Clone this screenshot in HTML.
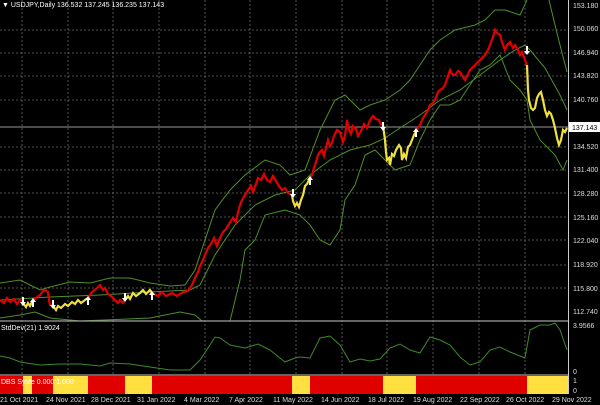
<!DOCTYPE html>
<html><head><style>
html,body{margin:0;padding:0;background:#000;width:600px;height:405px;overflow:hidden}
svg{display:block}
text{font-family:"Liberation Sans",sans-serif;font-size:7px;fill:#ddd}
</style></head><body>
<svg width="600" height="405" viewBox="0 0 600 405">
<defs>
<path id="dn" d="M-1,-5 H1 V0 H3 L0,4 L-3,0 H-1 Z" fill="#fff"/>
<path id="up" d="M-1,5 H1 V0 H3 L0,-4 L-3,0 H-1 Z" fill="#fff"/>
</defs>
<rect width="600" height="405" fill="#000"/>
<g stroke="#6a6a6a" stroke-width="0.8" stroke-dasharray="2,2">
<line x1="22" y1="0" x2="22" y2="394"/><line x1="68" y1="0" x2="68" y2="394"/><line x1="113" y1="0" x2="113" y2="394"/><line x1="159" y1="0" x2="159" y2="394"/><line x1="205" y1="0" x2="205" y2="394"/><line x1="250" y1="0" x2="250" y2="394"/><line x1="296" y1="0" x2="296" y2="394"/><line x1="342" y1="0" x2="342" y2="394"/><line x1="387" y1="0" x2="387" y2="394"/><line x1="433" y1="0" x2="433" y2="394"/><line x1="479" y1="0" x2="479" y2="394"/><line x1="525" y1="0" x2="525" y2="394"/>
<line x1="0" y1="30" x2="568" y2="30"/><line x1="0" y1="53" x2="568" y2="53"/><line x1="0" y1="76" x2="568" y2="76"/><line x1="0" y1="100" x2="568" y2="100"/><line x1="0" y1="147" x2="568" y2="147"/><line x1="0" y1="170" x2="568" y2="170"/><line x1="0" y1="193" x2="568" y2="193"/><line x1="0" y1="217" x2="568" y2="217"/><line x1="0" y1="240" x2="568" y2="240"/><line x1="0" y1="265" x2="568" y2="265"/><line x1="0" y1="288" x2="568" y2="288"/>
</g>
<line x1="0" y1="127" x2="568" y2="127" stroke="#9a9a9a" stroke-width="1"/>
<g fill="none" stroke="#4f8f2a" stroke-width="1">
<polyline points="0,283 20,280 40,290 50,287 70,282 90,283 110,278 130,278 150,283 170,286 185,285 195,270 215,210 230,190 245,175 265,160 280,165 290,175 305,170 320,130 335,100 345,95 360,110 370,105 385,100 400,90 410,80 420,65 430,50 440,40 455,30 475,25 485,20 495,10 505,10 520,15 527,0"/>
<polyline points="549,0 555,25 560,45 567,72"/>
<polyline points="0,300 50,297 100,295 150,292 190,290 200,285 215,255 235,225 255,205 275,195 295,190 310,175 330,160 350,150 370,145 385,138 400,128 420,115 440,100 460,90 480,75 500,60 515,50 525,45 530,50 545,68 560,95 567,110"/>
<polyline points="0,318 20,315 35,312 50,318 80,321 150,318 180,312 195,315 202,321"/>
<polyline points="230,321 240,280 245,250 255,240 265,215 285,210 300,215 310,225 320,240 330,245 340,230 345,200 355,185 365,155 375,150 385,160 395,170 410,165 420,140 430,120 440,105 450,105 460,100 470,85 480,70 490,65 500,55 510,80 520,90 527,100 530,120 540,140 555,155 563,170 567,160"/>
</g>
<g fill="none" stroke-width="2.2" stroke-linejoin="miter">
<polyline stroke="#e00000" points="0,300 4,303 7,298 10,302 14,299 17,304 20,300 23,303"/>
<polyline stroke="#f0e040" points="23,303 26,307 28,303 30,306 32,302"/>
<polyline stroke="#e00000" points="32,302 36,298 40,295 43,291 45,290 48,292 49,300 50,305 53,305"/>
<polyline stroke="#f0e040" points="53,306 56,310 58,306 61,308 65,304 68,306 72,302 75,304 78,300 81,303 85,300 88,298"/>
<polyline stroke="#e00000" points="88,298 92,292 96,289 100,285 103,290 105,288 108,294 112,297 115,300 118,303 120,300 123,303 125,300"/>
<polyline stroke="#f0e040" points="125,300 128,296 130,299 133,293 136,296 140,293 143,290 146,294 150,290 152,293"/>
<polyline stroke="#e00000" points="152,293 158,296 162,292 166,296 172,293 177,296 183,292 188,291 192,285 195,278 198,272 200,266 203,260 205,255 208,248 211,244 214,238 217,246 220,238 223,232 226,229 229,224 233,218 236,222 239,208 242,200 245,195 248,190 251,186 253,192 256,184 258,178 261,180 264,174 267,180 270,182 273,176 276,181 279,186 282,190 285,188 288,193 292,195"/>
<polyline stroke="#f0e040" points="292,195 293,201 295,206 297,203 299,207 301,200 303,195 305,186 307,184 310,178"/>
<polyline stroke="#e00000" points="310,178 312,175 314,168 316,162 318,155 320,152 322,150 324,156 326,148 328,140 330,146 332,143 334,136 337,130 340,132 343,142 345,136 347,120 349,130 351,134 353,126 356,129 358,136 361,131 364,124 367,128 370,120 373,116 376,119 379,120 381,124 383,125"/>
<polyline stroke="#f0e040" points="383,125 385,140 386,152 387,160 389,158 390,165 392,154 394,156 396,150 399,145 401,148 402,160 404,154 406,158 408,147 410,145 412,140 414,135 416,132"/>
<polyline stroke="#e00000" points="416,132 418,128 420,125 423,118 425,115 428,110 430,105 433,103 435,100 438,92 440,90 443,88 445,85 448,76 450,70 452,74 455,75 458,71 460,72 463,77 465,80 468,74 470,70 473,67 475,65 478,62 480,60 483,57 485,55 488,50 490,45 493,37 495,30 497,33 500,35 502,42 505,50 507,45 510,42 513,48 515,45 518,50 520,55 522,52 525,60 527,65"/>
<polyline stroke="#f0e040" points="527,65 528,90 529,100 531,108 533,110 535,108 537,98 539,94 541,92 543,100 545,110 547,116 549,112 551,114 553,120 555,128 557,138 559,145 561,140 563,130 565,132 567,128"/>
</g>
<use href="#dn" x="23" y="302"/><use href="#up" x="33" y="302"/>
<use href="#dn" x="53" y="305"/><use href="#up" x="88" y="300"/>
<use href="#dn" x="125" y="298"/><use href="#up" x="152" y="295"/>
<use href="#dn" x="293" y="194"/><use href="#up" x="310" y="180"/>
<use href="#dn" x="383" y="127"/><use href="#up" x="416" y="132"/>
<use href="#dn" x="527" y="51"/>
<line x1="0" y1="321" x2="568" y2="321" stroke="#a0a0a0" stroke-width="1.2"/>
<line x1="0" y1="375" x2="568" y2="375" stroke="#a0a0a0" stroke-width="1.2"/>
<polyline fill="none" stroke="#3c8a2a" stroke-width="1" points="0,356 10,358 20,362 40,365 60,364 80,364 100,366 110,363 130,364 150,367 170,370 190,370 200,360 210,345 215,337 220,338 230,345 245,348 258,344 270,350 285,362 295,358 300,357 310,358 320,338 330,336 340,345 350,362 360,359 370,361 380,359 390,348 400,344 410,350 420,353 430,337 440,340 450,345 460,357 470,365 480,362 490,350 500,347 510,352 525,358 530,330 540,325 550,325 555,323 560,330 567,350"/>
<g>
<rect x="0" y="376" width="568" height="18" fill="#e00000"/>
<rect x="23" y="376" width="9" height="18" fill="#ffe040"/>
<rect x="53" y="376" width="35" height="18" fill="#ffe040"/>
<rect x="125" y="376" width="27" height="18" fill="#ffe040"/>
<rect x="292" y="376" width="18" height="18" fill="#ffe040"/>
<rect x="383" y="376" width="33" height="18" fill="#ffe040"/>
<rect x="527" y="376" width="41" height="18" fill="#ffe040"/>
</g>
<line x1="568.5" y1="0" x2="568.5" y2="394" stroke="#ccc" stroke-width="1"/>
<text x="2" y="7" style="fill:#fff">▼ USDJPY,Daily  136.532 137.245 136.235 137.143</text>
<text x="1" y="330" style="fill:#fff">StdDev(21) 1.9024</text>
<text x="1" y="384" style="fill:#fff">DBS Syste  0.000  1.000</text>
<g>
<text x="573" y="8">153.180</text><text x="573" y="31">150.060</text><text x="573" y="55">146.940</text><text x="573" y="78">143.820</text><text x="573" y="102">140.760</text><text x="573" y="149">134.520</text><text x="573" y="172">131.400</text><text x="573" y="196">128.280</text><text x="573" y="220">125.160</text><text x="573" y="243">122.040</text><text x="573" y="267">118.920</text><text x="573" y="291">115.800</text><text x="573" y="314">112.740</text>
<text x="573" y="328">3.9566</text><text x="573" y="374">0</text><text x="573" y="383">1</text><text x="573" y="393">0</text>
</g>
<rect x="569" y="122" width="31" height="10" fill="#fff"/>
<text x="572" y="130" style="fill:#000">137.143</text>
<g>
<text x="0" y="402">21 Oct 2021</text><text x="46" y="402">24 Nov 2021</text><text x="91" y="402">28 Dec 2021</text><text x="137" y="402">31 Jan 2022</text><text x="184" y="402">4 Mar 2022</text><text x="229" y="402">7 Apr 2022</text><text x="273" y="402">11 May 2022</text><text x="321" y="402">14 Jun 2022</text><text x="368" y="402">18 Jul 2022</text><text x="413" y="402">19 Aug 2022</text><text x="460" y="402">22 Sep 2022</text><text x="506" y="402">26 Oct 2022</text><text x="552" y="402">29 Nov 2022</text>
</g>
</svg>
</body></html>
